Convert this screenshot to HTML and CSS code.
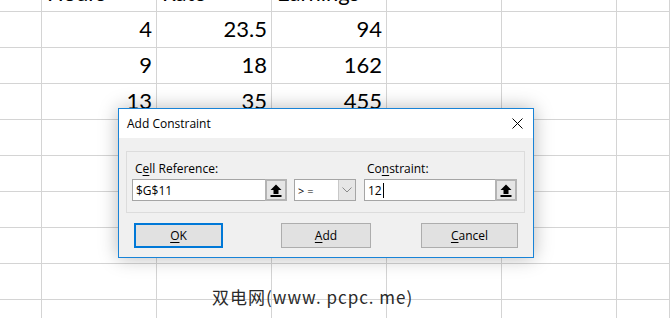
FILE: index.html
```html
<!DOCTYPE html>
<html lang="en">
<head>
    <meta charset="UTF-8">
    <title>Add Constraint</title>
    <link rel="stylesheet" href="styles.css">
</head>
<body>
    <div class="sheet">
        <div class="cell"></div><div class="cell text">Hours</div><div class="cell text">Rate</div><div class="cell text">Earnings</div><div class="cell"></div><div class="cell"></div><div class="cell"></div>
        <div class="cell"></div><div class="cell">4</div><div class="cell">23.5</div><div class="cell">94</div><div class="cell"></div><div class="cell"></div><div class="cell"></div>
        <div class="cell"></div><div class="cell">9</div><div class="cell">18</div><div class="cell">162</div><div class="cell"></div><div class="cell"></div><div class="cell"></div>
        <div class="cell"></div><div class="cell">13</div><div class="cell">35</div><div class="cell">455</div><div class="cell"></div><div class="cell"></div><div class="cell"></div>
        <div class="cell"></div><div class="cell"></div><div class="cell"></div><div class="cell"></div><div class="cell"></div><div class="cell"></div><div class="cell"></div>
        <div class="cell"></div><div class="cell"></div><div class="cell"></div><div class="cell"></div><div class="cell"></div><div class="cell"></div><div class="cell"></div>
        <div class="cell"></div><div class="cell"></div><div class="cell"></div><div class="cell"></div><div class="cell"></div><div class="cell"></div><div class="cell"></div>
        <div class="cell"></div><div class="cell"></div><div class="cell"></div><div class="cell"></div><div class="cell"></div><div class="cell"></div><div class="cell"></div>
        <div class="cell"></div><div class="cell"></div><div class="cell"></div><div class="cell"></div><div class="cell"></div><div class="cell"></div><div class="cell"></div>
        <div class="cell last"></div><div class="cell last"></div><div class="cell last"></div><div class="cell last"></div><div class="cell last"></div><div class="cell last"></div><div class="cell last"></div>
    </div>

    <div class="dialog">
        <div class="titlebar">
            <span>Add Constraint</span>
            <svg class="close" width="11" height="11" viewBox="0 0 11 11">
                <path d="M0.5 0.5 L10.5 10.5 M10.5 0.5 L0.5 10.5" stroke="#000" stroke-width="1" fill="none"/>
            </svg>
        </div>
        <div class="body">
            <div class="group">
                <div class="field ref">
                    <label>C<u>e</u>ll Reference:</label>
                    <div class="input">
                        <span class="value">$G$11</span>
                        <span class="pick">
                            <svg width="12" height="13" viewBox="0 0 12 13">
                                <path d="M6 0.5 L11.5 6 H8.5 V10 H3.5 V6 H0.5 Z" fill="#000"/>
                                <rect x="0.5" y="11" width="11" height="2" fill="#000"/>
                            </svg>
                        </span>
                    </div>
                </div>
                <div class="field op">
                    <label>&nbsp;</label>
                    <div class="combo">
                        <span class="value">&gt; =</span>
                        <span class="drop">
                            <svg width="10" height="6" viewBox="0 0 10 6">
                                <path d="M0.5 0.5 L5 5 L9.5 0.5" stroke="#8a8a8a" stroke-width="1" fill="none"/>
                            </svg>
                        </span>
                    </div>
                </div>
                <div class="field con">
                    <label>Co<u>n</u>straint:</label>
                    <div class="input">
                        <span class="value">12<span class="caret"></span></span>
                        <span class="pick">
                            <svg width="12" height="13" viewBox="0 0 12 13">
                                <path d="M6 0.5 L11.5 6 H8.5 V10 H3.5 V6 H0.5 Z" fill="#000"/>
                                <rect x="0.5" y="11" width="11" height="2" fill="#000"/>
                            </svg>
                        </span>
                    </div>
                </div>
            </div>
            <div class="buttons">
                <button class="btn ok"><u>O</u>K</button>
                <button class="btn add"><u>A</u>dd</button>
                <button class="btn cancel"><u>C</u>ancel</button>
            </div>
        </div>
    </div>

    <div class="watermark">双电网(www. pcpc. me)</div>
</body>
</html>
```

FILE: styles.css
```css
body {
    margin: 0;
    width: 670px;
    height: 318px;
    overflow: hidden;
    background: #fff;
    position: relative;
    font-family: Lato, "Liberation Sans", sans-serif;
}

/* spreadsheet */
.sheet {
    display: grid;
    grid-template-columns: 42px repeat(5, 115px) 53px;
    grid-template-rows: 12px repeat(8, 36px) 18px;
}

.cell {
    box-sizing: border-box;
    border-right: 1px solid #d4d4d4;
    border-bottom: 1px solid #d4d4d4;
    display: flex;
    align-items: flex-end;
    justify-content: flex-end;
    padding: 0 4px 7px 0;
    font-size: 22px;
    line-height: 1;
    color: #000;
    overflow: hidden;
}

.cell.text {
    justify-content: flex-start;
    padding-left: 5px;
}

.cell.last {
    border-bottom: none;
}

/* dialog */
.dialog {
    position: absolute;
    left: 118px;
    top: 108px;
    width: 414px;
    height: 148px;
    border: 1px solid #1883d7;
    background: #f0f0f0;
    box-shadow: 0 0 18px rgba(0, 0, 0, 0.28);
    font-family: "Open Sans", "Noto Sans", sans-serif;
    font-size: 12px;
    color: #000;
}

.titlebar {
    height: 29px;
    background: #fff;
    display: flex;
    align-items: center;
    justify-content: space-between;
    padding: 0 10px 0 8px;
}

.body {
    padding: 13px 8px 0 7px;
}

.group {
    border: 1px solid #dcdcdc;
    display: flex;
    padding: 8px 0 0 5px;
    box-sizing: border-box;
    height: 62px;
}

.field {
    display: flex;
    flex-direction: column;
    gap: 2px;
}

.field label {
    height: 17px;
    line-height: 17px;
    padding-left: 3px;
}

.field u,
.btn u {
    text-decoration-thickness: 1px;
    text-underline-offset: 2px;
}

.ref {
    width: 155px;
}

.op {
    width: 62px;
    margin-left: 7px;
}

.con {
    width: 153px;
    margin-left: 8px;
}

.input,
.combo {
    height: 22px;
    display: flex;
    background: #fff;
    border: 1px solid #a5a5a5;
    box-sizing: border-box;
}

.value {
    flex: 1;
    display: flex;
    align-items: center;
    padding-left: 3px;
    font-size: 12px;
}

.combo .value {
    font-size: 11px;
}

.caret {
    display: inline-block;
    width: 1px;
    height: 15px;
    background: #000;
    margin-left: 1px;
}

.pick {
    width: 18px;
    background: #e5e5e5;
    border: 2px solid #b4b4b4;
    margin: -1px -1px -1px 0;
    display: flex;
    align-items: center;
    justify-content: center;
}

.drop {
    width: 16px;
    background: #e6e6e6;
    border-left: 1px solid #c8c8c8;
    display: flex;
    align-items: center;
    justify-content: center;
}

.buttons {
    display: flex;
    margin-top: 10px;
    padding-left: 8px;
}

.btn {
    height: 25px;
    background: #e1e1e1;
    border: 1px solid #adadad;
    font-family: "Open Sans", "Noto Sans", sans-serif;
    font-size: 12px;
    color: #000;
    padding: 0;
}

.ok {
    width: 89px;
    border: 2px solid #0078d7;
}

.add {
    width: 90px;
    margin-left: 58px;
}

.cancel {
    width: 97px;
    margin-left: 50px;
}

.watermark {
    position: absolute;
    left: 212px;
    top: 284px;
    font-family: "Noto Sans CJK SC", "Liberation Sans", sans-serif;
    font-size: 17px;
    color: #2a2a2a;
    white-space: nowrap;
    letter-spacing: 1px;
}
```
